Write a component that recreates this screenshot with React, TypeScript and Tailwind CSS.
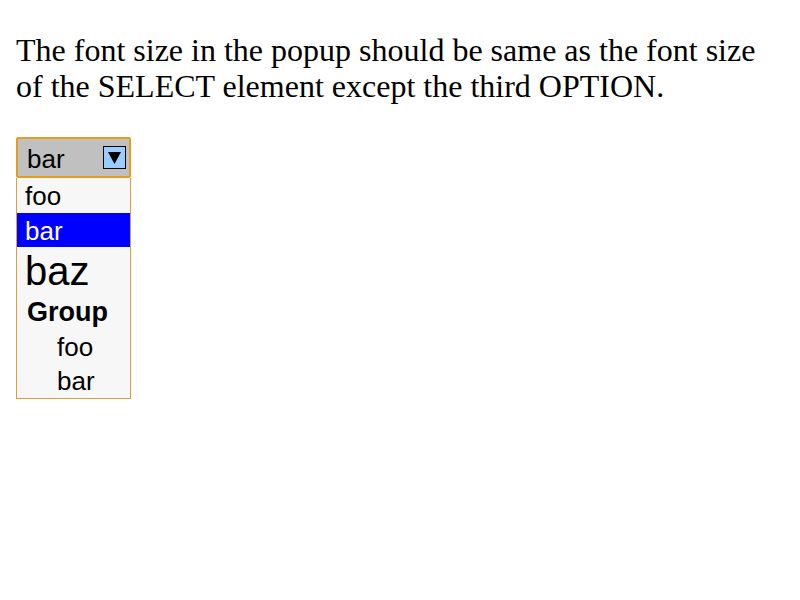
export default function App() {
  const rowBase = "box-border whitespace-nowrap font-['Liberation_Sans',Arial,sans-serif] text-black";
  return (
    <div className="bg-white px-4 pt-8">
      <p className="mb-[33px] font-['Liberation_Serif','Times_New_Roman',serif] text-[32px] leading-[36px] text-black">
        The font size in the popup should be same as the font size of the SELECT element except the third OPTION.
      </p>
      <div className="w-[115px]">
        {/* closed select */}
        <div className="flex h-[41px] items-center justify-between rounded-[2px] border-2 border-[#e59d1b] bg-[#c0c0c0] pl-[9px] pr-[3px]">
          <span className={`${rowBase} pt-[2px] text-[26px] leading-none`}>bar</span>
          <span className="flex h-[23px] w-[23px] items-center justify-center border border-black bg-[#99ccff]">
            <svg width="15" height="15" viewBox="0 0 15 15">
              <path d="M1 2h13L7.5 14z" fill="#000" />
            </svg>
          </span>
        </div>
        {/* popup */}
        <div className="border border-t-0 border-[#d9a13a] bg-[#f7f7f7]">
          <div className={`${rowBase} h-[35px] pl-[8px] pt-[2px] text-[26px] leading-[33px]`}>foo</div>
          <div className={`${rowBase} h-[34px] bg-[#0000ff] pl-[8px] pt-[2px] text-[26px] leading-[32px] text-white`}>bar</div>
          <div className={`${rowBase} h-[47px] pl-[8px] pt-[2px] text-[40px] leading-[45px]`}>baz</div>
          <div className={`${rowBase} h-[35px] pl-[10px] pt-[2px] text-[27px] font-bold leading-[33px]`}>Group</div>
          <div className={`${rowBase} h-[34px] pl-[40px] pt-[2px] text-[26px] leading-[32px]`}>foo</div>
          <div className={`${rowBase} h-[35px] pl-[40px] pt-[2px] text-[26px] leading-[33px]`}>bar</div>
        </div>
      </div>
    </div>
  );
}
